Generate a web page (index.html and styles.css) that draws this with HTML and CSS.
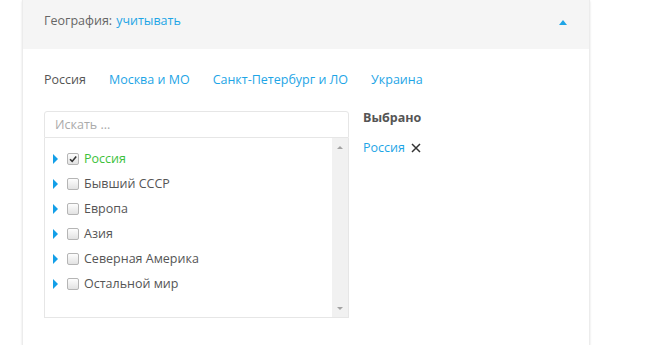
FILE: index.html
```html
<!DOCTYPE html>
<html lang="ru">
<head>
<meta charset="utf-8">
<title>География</title>
<link rel="stylesheet" href="styles.css">
</head>
<body>
<div class="card">
  <div class="card-head">
    <span class="head-label">География:</span>
    <a class="link head-value">учитывать</a>
    <span class="caret-up"></span>
  </div>
  <div class="card-body">
    <div class="tabs">
      <span class="tab active">Россия</span>
      <a class="tab link">Москва и МО</a>
      <a class="tab link">Санкт-Петербург и ЛО</a>
      <a class="tab link">Украина</a>
    </div>
    <div class="cols">
      <div class="picker">
        <div class="search">Искать ...</div>
        <div class="listbox">
          <ul class="tree">
            <li class="row"><span class="arrow"></span><span class="cb checked"><svg viewBox="0 0 10 10" width="10" height="10"><path d="M2 5.2 L4.2 7.4 L8.2 2.4" fill="none" stroke="#333" stroke-width="1.6"/></svg></span><span class="name sel">Россия</span></li>
            <li class="row"><span class="arrow"></span><span class="cb"></span><span class="name">Бывший СССР</span></li>
            <li class="row"><span class="arrow"></span><span class="cb"></span><span class="name">Европа</span></li>
            <li class="row"><span class="arrow"></span><span class="cb"></span><span class="name">Азия</span></li>
            <li class="row"><span class="arrow"></span><span class="cb"></span><span class="name">Северная Америка</span></li>
            <li class="row"><span class="arrow"></span><span class="cb"></span><span class="name">Остальной мир</span></li>
          </ul>
          <div class="scrollbar">
            <span class="sb-up"></span>
            <span class="sb-down"></span>
          </div>
        </div>
      </div>
      <div class="chosen">
        <div class="chosen-title">Выбрано</div>
        <div class="chip"><a class="link">Россия</a><svg class="remove" viewBox="0 0 10 10" width="10" height="10"><path d="M1 1 L9 9 M9 1 L1 9" stroke="#333" stroke-width="1.5" fill="none"/></svg></div>
      </div>
    </div>
  </div>
</div>
</body>
</html>
```
FILE: styles.css
```css
* { box-sizing: border-box; }
html, body { margin: 0; padding: 0; background: #fff; }
body {
  font-family: "Open Sans", "Noto Sans", sans-serif;
  font-size: 12.5px;
  color: #555;
}
.link { color: #1ea5e6; text-decoration: none; }

.card {
  margin-left: 22px;
  width: 568px;
  border-left: 1px solid #ececec;
  border-right: 1px solid #ececec;
  box-shadow: 0 1px 2px rgba(0,0,0,0.12);
  background: #fff;
}
.card-head {
  height: 49px;
  background: #f5f5f5;
  display: flex;
  align-items: center;
  padding: 0 21px 8px 21px;
}
.head-label { color: #666; margin-right: 4px; }
.caret-up {
  margin-left: auto;
  margin-right: 1px;
  margin-top: 4px;
  width: 0; height: 0;
  border-left: 4.5px solid transparent;
  border-right: 4.5px solid transparent;
  border-bottom: 5px solid #1ea5e6;
}
.card-body { padding: 22px 21px 27px 21px; }
.tabs { display: flex; line-height: 18px; }
.tab { margin-right: 23px; }
.tab.active { color: #555; }
.cols { display: flex; margin-top: 22px; gap: 14px; }
.picker { width: 305px; }
.search {
  height: 27px;
  border: 1px solid #e6e6e6;
  border-radius: 3px 3px 0 0;
  padding: 4px 10px;
  color: #aaa;
  line-height: 18px;
}
.listbox {
  height: 180px;
  border: 1px solid #e6e6e6;
  border-top: none;
  display: flex;
}
.tree { list-style: none; margin: 0; padding: 8px 0 0 8px; flex: 1; }
.row { height: 25px; display: flex; align-items: center; }
.arrow {
  width: 0; height: 0;
  border-top: 5px solid transparent;
  border-bottom: 5px solid transparent;
  border-left: 5px solid #139fe8;
  margin-right: 9px;
}
.cb {
  width: 12px; height: 12px;
  border: 1px solid #b5b5b5;
  border-radius: 2px;
  background: linear-gradient(#fdfdfd, #e2e2e2);
  margin-right: 5px;
  display: flex;
  align-items: center;
  justify-content: center;
}
.name { color: #555; }
.name.sel { color: #3cc13c; }
.scrollbar {
  width: 16px;
  background: #f1f1f1;
  position: relative;
}
.sb-up, .sb-down {
  position: absolute;
  left: 5px;
  width: 0; height: 0;
  border-left: 3.5px solid transparent;
  border-right: 3.5px solid transparent;
}
.sb-up { top: 8px; border-bottom: 3.5px solid #a3a3a3; }
.sb-down { bottom: 7px; border-top: 3.5px solid #a3a3a3; }
.chosen-title { font-weight: 700; color: #555; line-height: 16px; margin-top: -1px; font-size: 12.5px; }
.chip { margin-top: 13px; display: flex; align-items: center; line-height: 18px; }
.remove { margin-left: 6px; }
```
